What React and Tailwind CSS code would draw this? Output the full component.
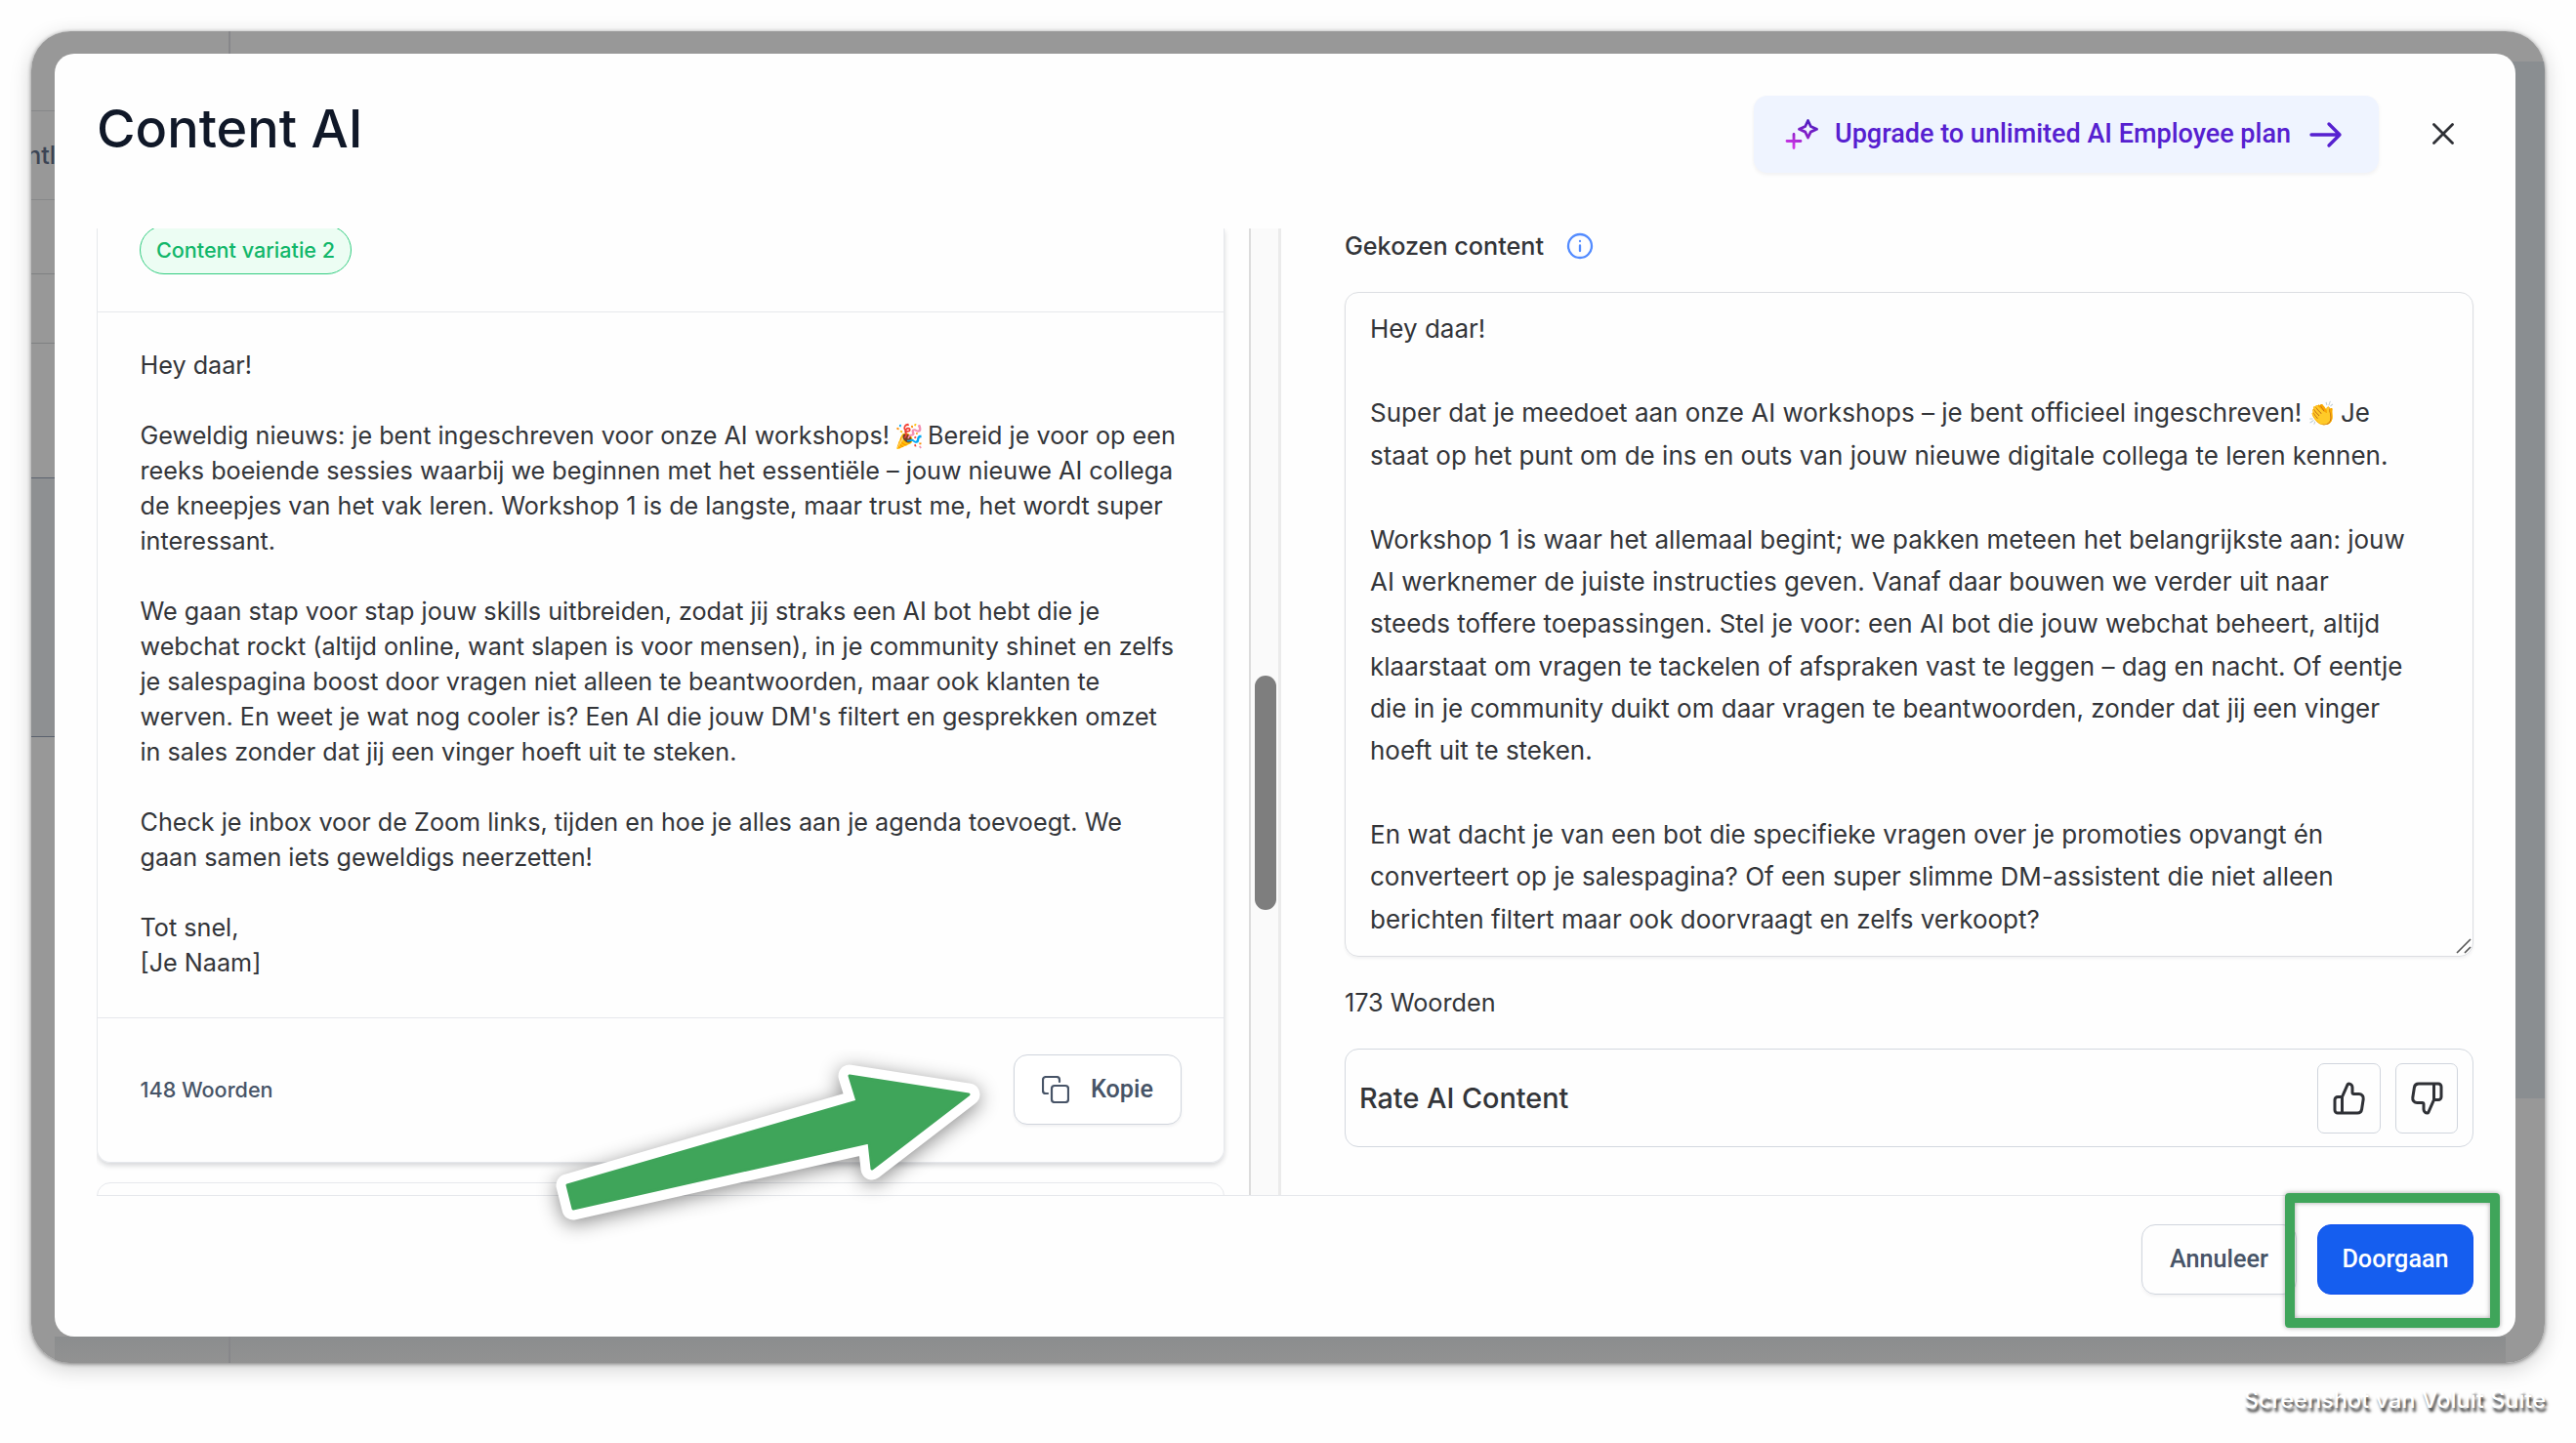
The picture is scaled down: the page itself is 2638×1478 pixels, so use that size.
import React from "react";

const leftText = [
  "Hey daar!",
  "",
  "Geweldig nieuws: je bent ingeschreven voor onze AI workshops! 🎉 Bereid je voor op een",
  "reeks boeiende sessies waarbij we beginnen met het essentiële – jouw nieuwe AI collega",
  "de kneepjes van het vak leren. Workshop 1 is de langste, maar trust me, het wordt super",
  "interessant.",
  "",
  "We gaan stap voor stap jouw skills uitbreiden, zodat jij straks een AI bot hebt die je",
  "webchat rockt (altijd online, want slapen is voor mensen), in je community shinet en zelfs",
  "je salespagina boost door vragen niet alleen te beantwoorden, maar ook klanten te",
  "werven. En weet je wat nog cooler is? Een AI die jouw DM's filtert en gesprekken omzet",
  "in sales zonder dat jij een vinger hoeft uit te steken.",
  "",
  "Check je inbox voor de Zoom links, tijden en hoe je alles aan je agenda toevoegt. We",
  "gaan samen iets geweldigs neerzetten!",
  "",
  "Tot snel,",
  "[Je Naam]",
];

const rightText = [
  "Hey daar!",
  "",
  "Super dat je meedoet aan onze AI workshops – je bent officieel ingeschreven! 👏 Je",
  "staat op het punt om de ins en outs van jouw nieuwe digitale collega te leren kennen.",
  "",
  "Workshop 1 is waar het allemaal begint; we pakken meteen het belangrijkste aan: jouw",
  "AI werknemer de juiste instructies geven. Vanaf daar bouwen we verder uit naar",
  "steeds toffere toepassingen. Stel je voor: een AI bot die jouw webchat beheert, altijd",
  "klaarstaat om vragen te tackelen of afspraken vast te leggen – dag en nacht. Of eentje",
  "die in je community duikt om daar vragen te beantwoorden, zonder dat jij een vinger",
  "hoeft uit te steken.",
  "",
  "En wat dacht je van een bot die specifieke vragen over je promoties opvangt én",
  "converteert op je salespagina? Of een super slimme DM-assistent die niet alleen",
  "berichten filtert maar ook doorvraagt en zelfs verkoopt?",
];

// emoji get a fixed width so the rest of the line does not shift
function Line({ text }) {
  return text.split(/(🎉|👏)/u).map((part, i) =>
    part === "🎉" || part === "👏" ? (
      <span key={i} className="-ml-[2px] mr-[1px] inline-block w-[26px] text-[24px] leading-none">{part}</span>
    ) : (
      part
    )
  );
}

function SparkleIcon() {
  return (
    <svg width="36" height="36" viewBox="0 0 36 36" fill="none" strokeWidth="2.8" strokeLinejoin="round" strokeLinecap="round">
      <defs>
        <linearGradient id="spark" gradientUnits="userSpaceOnUse" x1="25" y1="2" x2="13" y2="33">
          <stop offset="0" stopColor="#4a1fc0" />
          <stop offset="0.5" stopColor="#8a1fc8" />
          <stop offset="1" stopColor="#d63bea" />
        </linearGradient>
      </defs>
      <path stroke="url(#spark)" d="M25.500 3.500 L28.300 9.500 L34.500 12.300 L28.300 15.100 L25.500 21 L22.700 15.100 L16.500 12.300 L22.700 9.500 Z" />
      <path stroke="url(#spark)" d="M11 17.500 V31.500 M4 24.500 H18" />
    </svg>
  );
}

function ThumbIcon({ down }) {
  return (
    <svg width="36" height="36" viewBox="0 0 24 24" fill="none" stroke="#2f3136" strokeWidth="2" strokeLinecap="round" strokeLinejoin="round" className={down ? "rotate-180" : ""}>
      <path d="M7 22V11M2 13v7a2 2 0 0 0 2 2h13.426a3 3 0 0 0 2.965-2.544l1.077-7A3 3 0 0 0 18.503 9H15a1 1 0 0 1-1-1V4.466A2.466 2.466 0 0 0 11.534 2a.822.822 0 0 0-.751.488l-3.520 7.918A1 1 0 0 1 6.350 11H4a2 2 0 0 0-2 2Z" />
    </svg>
  );
}

// grey page that is visible around the dialog
function Backdrop() {
  return (
    <div className="absolute inset-0 overflow-hidden rounded-[40px] bg-[#989898]">
      <div className="absolute left-0 top-[458px] h-[264px] w-[24px] bg-[#8e9092]"></div>
      <div className="absolute right-0 top-[31px] h-[1062px] w-[40px] bg-[#8a8e91]"></div>
      <div className="absolute bottom-0 left-[24px] right-[40px] h-[27px] bg-linear-to-b from-[#8b8d8e] to-[#929292]"></div>
      <div className="absolute left-[202px] top-0 h-full w-[2px] bg-[#87878a]"></div>
      <div className="absolute left-0 top-[81px] h-px w-[24px] bg-[#87888a]"></div>
      <div className="absolute left-0 top-[172px] h-px w-[24px] bg-[#87888a]"></div>
      <div className="absolute left-0 top-[248px] h-px w-[24px] bg-[#7f8082]"></div>
      <div className="absolute left-0 top-[319px] h-px w-[24px] bg-[#7f8082]"></div>
      <div className="absolute left-0 top-[457px] h-px w-[24px] bg-[#5b626e]"></div>
      <div className="absolute left-0 top-[722px] h-px w-[24px] bg-[#5b626e]"></div>
      <div className="absolute left-0 top-[111px] flex w-[25px] justify-end overflow-hidden text-[25px] font-medium leading-[32px] text-[#3b4454]">
        ntl
      </div>
    </div>
  );
}

function Header() {
  return (
    <div className="flex h-[179px] shrink-0 items-start justify-between pl-[43px] pr-[63px]">
      <h1 className="mt-[44px] whitespace-nowrap text-[54px] font-medium leading-[66px] text-[#101828]">Content AI</h1>
      <div className="mt-[43px] flex h-[79px] items-center">
        <button className="flex h-[79px] w-[640px] items-center rounded-[14px] bg-[#eff4ff] pl-[30px] shadow-[0_2px_4px_rgba(16,24,40,0.06)]">
          <SparkleIcon />
          <span className="ml-[17px] w-[466px] whitespace-nowrap text-left font-[Roboto] text-[27px] font-medium text-[#5620d0]">
            Upgrade to unlimited AI Employee plan
          </span>
          <svg className="ml-[20px]" width="34" height="28" viewBox="0 0 34 28" fill="none" stroke="#5620d0" strokeWidth="3.400" strokeLinecap="round" strokeLinejoin="round">
            <path d="M2 14H31M20 3L31 14L20 25" />
          </svg>
        </button>
        <svg className="-mt-[1px] ml-[55px]" width="22" height="22" viewBox="0 0 22 22" stroke="#2f3136" strokeWidth="2.800" strokeLinecap="round">
          <path d="M1.500 1.500L20.500 20.500M20.500 1.500L1.500 20.500" />
        </svg>
      </div>
    </div>
  );
}

function VariationList() {
  return (
    <div className="ml-[43px] flex h-[990px] w-[1160px] shrink-0 flex-col overflow-hidden pr-[5px]">
      <div className="flex h-[957px] shrink-0 flex-col rounded-b-[14px] border border-t-0 border-[#e6e8ec] shadow-[0_3px_5px_rgba(16,24,40,0.16)]">
        <div className="h-[86px] shrink-0 border-b border-[#e6e8ec] pl-[43px]">
          <span className="-mt-[3px] flex h-[50px] w-[217px] items-center justify-center whitespace-nowrap rounded-full border-[1.500px] border-[#32cc80] bg-[#ecfdf3] text-[21.600px] font-medium text-[#12b76a]">
            Content variatie 2
          </span>
        </div>
        <div className="h-[723px] shrink-0 border-b border-[#e6e8ec] pl-[43.500px] pt-[36px] text-[25.200px] leading-[36px] text-[#333539]">
          {leftText.map((line, i) => (
            <p key={i} className="h-[36px] whitespace-nowrap">
              <Line text={line} />
            </p>
          ))}
        </div>
        <div className="flex grow items-center justify-between pl-[43.500px] pr-[43px]">
          <span className="text-[21.600px] font-medium text-[#475467]">148 Woorden</span>
          <button className="-mt-[2px] flex h-[72px] w-[172px] items-center rounded-[14px] border-[1.500px] border-[#d0d5dd] bg-white pl-[28px] shadow-[0_2px_3px_rgba(16,24,40,0.05)]">
            <svg width="28" height="28" viewBox="0 0 28 28" fill="none" stroke="#475467" strokeWidth="2.200" strokeLinecap="round" strokeLinejoin="round">
              <rect x="10" y="10" width="17" height="17" rx="3" />
              <path d="M6 18H4a3 3 0 0 1-3-3V4a3 3 0 0 1 3-3H15a3 3 0 0 1 3 3V6" />
            </svg>
            <span className="ml-[22px] font-[Roboto] text-[25.200px] font-medium text-[#475467]">Kopie</span>
          </button>
        </div>
      </div>
      <div className="mt-[20px] h-[40px] shrink-0 rounded-t-[14px] border border-[#e6e8ec]"></div>
    </div>
  );
}

function Scrollbar() {
  return (
    <div className="ml-[20px] h-[990px] w-[33px] shrink-0 border-l-2 border-r-[3px] border-l-[#dcdcdc] border-r-[#ebebeb] bg-[#fafafa] pl-[4px] pt-[458px]">
      <div className="h-[240px] w-[22px] rounded-full bg-[#7e7e7e]"></div>
    </div>
  );
}

function ChosenContent() {
  return (
    <div className="ml-[65px] w-[1156px] shrink-0 text-[#333539]">
      <div className="flex h-[65px] items-start">
        <span className="whitespace-nowrap text-[25.200px] font-medium leading-[36px]">Gekozen content</span>
        <svg className="ml-[23px] mt-[4px]" width="28" height="28" viewBox="0 0 28 28" fill="none" stroke="#528bff" strokeWidth="2.300" strokeLinecap="round">
          <circle cx="14" cy="14" r="12" />
          <path d="M14 13.500V19M14 9V9.100" />
        </svg>
      </div>
      <div className="relative h-[681px] rounded-[14px] border-[1.500px] border-[#dcdee2] pl-[25px] pt-[15px] text-[26px] leading-[43.200px] shadow-[0_2px_3px_rgba(16,24,40,0.05)]">
        {rightText.map((line, i) => (
          <p key={i} className="h-[43.200px] whitespace-nowrap">
            <Line text={line} />
          </p>
        ))}
        <svg className="absolute bottom-[1px] right-0" width="18" height="18" viewBox="0 0 18 18" stroke="#555" strokeWidth="1.600">
          <path d="M2 16L16 2M10 16L16 10" />
        </svg>
      </div>
      <p className="mt-[29px] text-[25.200px] leading-[36px]">173 Woorden</p>
      <div className="mt-[29px] flex h-[101px] items-center rounded-[14px] border-[1.500px] border-[#d3d8df] pl-[14px] pr-[15px]">
        <span className="grow whitespace-nowrap text-[28.800px] font-medium">Rate AI Content</span>
        <button className="mr-[15px] flex h-[72px] w-[65px] items-center justify-center rounded-[7px] border-[1.500px] border-[#d0d5dd]">
          <ThumbIcon />
        </button>
        <button className="flex h-[72px] w-[64px] items-center justify-center rounded-[7px] border-[1.500px] border-[#d0d5dd]">
          <ThumbIcon down />
        </button>
      </div>
    </div>
  );
}

function Footer() {
  return (
    <div className="ml-[43px] mr-[43px] flex grow justify-end border-t border-[#e6e8ec] pt-[29px] font-[Roboto] text-[25.200px] font-medium">
      <button className="h-[72px] w-[159px] rounded-[14px] border-[1.500px] border-[#d0d5dd] text-[#475467] shadow-[0_2px_3px_rgba(16,24,40,0.05)]">
        Annuleer
      </button>
      <div className="relative ml-[21px]">
        <button className="h-[72px] w-[160px] rounded-[14px] border-[1.500px] border-[#1050ee] bg-[#155eef] text-white">
          Doorgaan
        </button>
        <div className="absolute -left-[33px] -top-[32px] h-[138px] w-[220px] rounded-[4px] border-[10px] border-[#3fa55a] shadow-[0_0_5px_rgba(0,0,0,0.35),inset_0_0_5px_rgba(0,0,0,0.35)]"></div>
      </div>
    </div>
  );
}

export default function App() {
  return (
    <div className="h-[1478px] w-[2638px] overflow-hidden bg-[#fefefe] p-[32px] font-[Inter]">
      <div className="relative h-[1364px] w-[2574px] rounded-[40px] pl-[24px] pt-[23px] shadow-[0_6px_22px_rgba(0,0,0,0.18),0_1px_4px_rgba(0,0,0,0.45)]">
        <Backdrop />
        <div className="relative flex h-[1314px] w-[2520px] flex-col rounded-[20px] bg-[#fefefe]">
          <Header />
          <div className="flex h-[990px] shrink-0">
            <VariationList />
            <Scrollbar />
            <ChosenContent />
          </div>
          <Footer />
        </div>
        {/* arrow that points at the copy button */}
        <svg className="absolute left-[518px] top-[1029px] overflow-visible drop-shadow-[0_4px_10px_rgba(0,0,0,0.45)]" width="480" height="200" viewBox="550 1060 480 200">
          <path d="M581 1213 L878 1127 L870 1101 L992 1120 L893 1196 L890 1169 L587 1237 Z" fill="#fff" stroke="#fff" strokeWidth="23" strokeLinejoin="round" />
          <path d="M581 1213 L878 1127 L870 1101 L992 1120 L893 1196 L890 1169 L587 1237 Z" fill="#3fa55a" stroke="#3fa55a" strokeWidth="3" strokeLinejoin="round" />
        </svg>
      </div>
      <p className="-mr-[1px] mt-[20px] text-right text-[23.600px] font-medium leading-[36px] text-white [text-shadow:2px_4px_3px_rgba(0,0,0,0.8)]">
        Screenshot van Voluit Suite
      </p>
    </div>
  );
}
